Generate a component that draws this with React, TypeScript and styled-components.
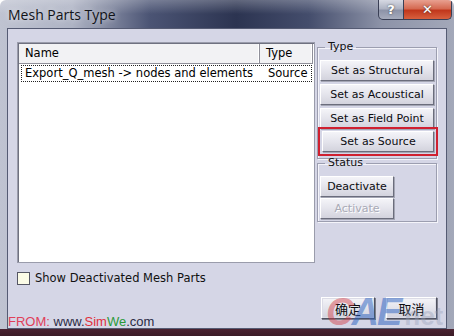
import React, { useState } from 'react'
import styled, { createGlobalStyle } from 'styled-components'

const GlobalStyle = createGlobalStyle`
  html, body {
    margin: 0;
    padding: 0;
    background: #ffffff;
  }
`

const uiFont = `'DejaVu Sans', 'Noto Sans CJK SC', sans-serif`

const Frame = styled.div`
  width: 454px;
  height: 336px;
  box-sizing: border-box;
  display: flex;
  flex-direction: column;
  padding: 0 7px 7px;
  border-radius: 6px 6px 0 0;
  background:
    linear-gradient(to top, #3b1b26 0, #4a2231 7px, transparent 7px),
    linear-gradient(180deg, rgba(255, 255, 255, 0.25) 0, rgba(255, 255, 255, 0) 14px),
    linear-gradient(90deg, #bfc3d1 0%, #aeb3c4 16%, #4b5474 33%, #2c3451 52%, #444d6c 68%, #8d93a8 84%, #a3a8b9 100%);
  font-family: ${uiFont};
  position: relative;
  overflow: hidden;
`

const TitleBar = styled.div`
  height: 28px;
  display: flex;
  align-items: flex-start;
  justify-content: space-between;
  flex-shrink: 0;
`

const Title = styled.div`
  font-family: 'Open Sans', 'Noto Sans', sans-serif;
  font-size: 14px;
  color: #111318;
  padding: 5px 0 0 1px;
  text-shadow: 0 0 6px rgba(255, 255, 255, 0.8);
`

const CaptionButtons = styled.div`
  display: flex;
  margin-right: -5px;
`

const CaptionButton = styled.div<{ $close?: boolean }>`
  width: ${(p) => (p.$close ? 48 : 26)}px;
  height: 20px;
  box-sizing: border-box;
  display: flex;
  align-items: center;
  justify-content: center;
  color: #ffffff;
  font-family: 'DejaVu Sans', sans-serif;
  font-weight: bold;
  font-size: 13px;
  border: 1px solid #3a3f55;
  border-top: none;
  border-left: ${(p) => (p.$close ? 'none' : '1px solid #3a3f55')};
  border-radius: ${(p) => (p.$close ? '0 0 5px 0' : '0 0 0 5px')};
  text-shadow: 0 0 2px #333;
  background: ${(p) =>
    p.$close
      ? 'linear-gradient(180deg, #e8a090 0%, #d56a52 45%, #c1371c 55%, #d8603e 100%)'
      : 'linear-gradient(180deg, #d6d9e3 0%, #aeb3c3 45%, #8d93a8 55%, #a6abbc 100%)'};
`

const Client = styled.div`
  flex: 1;
  position: relative;
  display: flex;
  flex-direction: column;
  padding: 13px 9px 0 9px;
  background: #d5d6e6;
  border: 1px solid #555b73;
`

const TopRow = styled.div`
  display: flex;
  align-items: flex-start;
  gap: 2px;
`

const ListView = styled.div`
  width: 299px;
  height: 221px;
  box-sizing: border-box;
  background: #ffffff;
  border: 1px solid #9a9cab;
  box-shadow: inset 1px 1px 0 #6f7180;
  padding: 1px;
  font-size: 11.5px;
  color: #000;
`

const HeaderRow = styled.div`
  display: flex;
  height: 19px;
  background: #f2f2f4;
  border-bottom: 1px solid #8f8f99;
`

const HeaderCell = styled.div<{ $w: number }>`
  width: ${(p) => p.$w}px;
  box-sizing: border-box;
  padding-left: 6px;
  line-height: 19px;
  border-right: 1px solid #8f8f99;
  box-shadow: inset -1px 0 0 #ffffff;
`

const Row = styled.div<{ $focused?: boolean }>`
  display: flex;
  margin: 1px 0 0 2px;
  width: 291px;
  height: 17px;
  box-sizing: border-box;
  border: 1px dotted ${(p) => (p.$focused ? '#222' : 'transparent')};
`

const Cell = styled.div<{ $w: number; $pad?: number }>`
  width: ${(p) => p.$w}px;
  box-sizing: border-box;
  padding-left: ${(p) => p.$pad ?? 3}px;
  line-height: 15px;
  white-space: nowrap;
`

const RightColumn = styled.div`
  width: 121px;
  margin-top: -2px;
  display: flex;
  flex-direction: column;
`

const Group = styled.fieldset<{ $gap?: number }>`
  margin: 0;
  padding: 6px 2px 2px 2px;
  border: 1px solid #9c9eb0;
  box-shadow: inset 1px 1px 0 #f4f4fa, 1px 1px 0 #f4f4fa;
  display: flex;
  flex-direction: column;
  gap: ${(p) => p.$gap ?? 3}px;
  & + & {
    margin-top: -3px;
  }
`

const Legend = styled.legend`
  font-size: 11px;
  line-height: 14px;
  padding: 0 3px;
  margin-left: 5px;
  color: #111;
`

const Button = styled.button<{ $w?: number }>`
  width: ${(p) => (p.$w ? `${p.$w}px` : '100%')};
  height: 21px;
  box-sizing: border-box;
  margin: 0;
  padding: 0;
  font-family: ${uiFont};
  font-size: 11px;
  color: #0c0c10;
  border: 1px solid;
  border-color: #ffffff #6b6d7c #6b6d7c #ffffff;
  box-shadow: 1px 1px 0 #a4a6b4;
  background: linear-gradient(180deg, #f4f4f8 0%, #e4e4ec 50%, #d3d3dd 100%);
  &:disabled {
    color: #a9aab6;
    text-shadow: 1px 1px 0 #ffffff;
  }
`

const Highlight = styled.div`
  margin: -5px -4px 0 -2px;
  border: 2px solid #cf2030;
  padding: 1px 2px 2px 2px;
`

const CheckRow = styled.label`
  display: flex;
  align-items: center;
  gap: 5px;
  margin-top: 8px;
  font-size: 11.5px;
  color: #111;
`

const CheckBox = styled.span`
  width: 11px;
  height: 11px;
  border: 1px solid #555664;
  background: #fbfbe6;
`

const Footer = styled.div`
  flex: 1;
  display: flex;
  justify-content: space-between;
  align-items: flex-end;
`

const FromText = styled.div`
  font-family: 'Liberation Sans', sans-serif;
  font-size: 13px;
  margin: 0 0 -1px -9px;
  line-height: 14px;
  color: #2b2b44;
`

const Colored = styled.span<{ $c: string }>`
  color: ${(p) => p.$c};
`

const DialogButtons = styled.div`
  display: flex;
  gap: 11px;
  margin-bottom: 9px;
`

const CjkButton = styled(Button)`
  font-family: 'Noto Sans CJK SC', sans-serif;
  font-size: 13px;
  height: 22px;
  border-color: #ffffff #4f5160 #4f5160 #ffffff;
  box-shadow: 1px 1px 0 #7d7f8c, inset 0 0 0 1px #dcdce6;
`

const Watermark = styled.div`
  position: absolute;
  left: 318px;
  top: 262px;
  display: flex;
  align-items: baseline;
  pointer-events: none;
  font-family: 'Liberation Sans', sans-serif;
  font-style: italic;
  font-weight: bold;
`

const WatermarkBig = styled.span`
  font-size: 38px;
  letter-spacing: -2px;
  color: rgba(40, 95, 190, 0.5);
`

const WatermarkC = styled.span`
  color: rgba(210, 50, 60, 0.45);
`

const WatermarkNet = styled.span`
  font-size: 26px;
  font-style: normal;
  color: rgba(150, 160, 185, 0.4);
  margin-left: 4px;
`

export default function App() {
  const [showDeactivated] = useState(false)

  return (
    <>
      <GlobalStyle />
      <Frame>
        <TitleBar>
          <Title>Mesh Parts Type</Title>
          <CaptionButtons>
            <CaptionButton>?</CaptionButton>
            <CaptionButton $close>✕</CaptionButton>
          </CaptionButtons>
        </TitleBar>
        <Client>
          <TopRow>
            <ListView>
              <HeaderRow>
                <HeaderCell $w={241}>Name</HeaderCell>
                <HeaderCell $w={53}>Type</HeaderCell>
              </HeaderRow>
              <Row $focused>
                <Cell $w={240}>Export_Q_mesh -&gt; nodes and elements</Cell>
                <Cell $w={49} $pad={6}>
                  Source
                </Cell>
              </Row>
            </ListView>
            <RightColumn>
              <Group>
                <Legend>Type</Legend>
                <Button>Set as Structural</Button>
                <Button>Set as Acoustical</Button>
                <Button>Set as Field Point</Button>
                <Highlight>
                  <Button>Set as Source</Button>
                </Highlight>
              </Group>
              <Group $gap={1}>
                <Legend>Status</Legend>
                <Button $w={74}>Deactivate</Button>
                <Button $w={74} disabled>
                  Activate
                </Button>
              </Group>
            </RightColumn>
          </TopRow>
          <CheckRow>
            <CheckBox aria-checked={showDeactivated} />
            Show Deactivated Mesh Parts
          </CheckRow>
          <Footer>
            <FromText>
              <Colored $c="#e0405a">FROM:</Colored> www.<Colored $c="#e0303c">Sim</Colored>
              <Colored $c="#2a9a3a">We</Colored>.com
            </FromText>
            <DialogButtons>
              <CjkButton $w={54}>确定</CjkButton>
              <CjkButton $w={51}>取消</CjkButton>
            </DialogButtons>
          </Footer>
          <Watermark>
            <WatermarkBig>
              <WatermarkC>C</WatermarkC>AE
            </WatermarkBig>
            <WatermarkNet>net</WatermarkNet>
          </Watermark>
        </Client>
      </Frame>
    </>
  )
}
